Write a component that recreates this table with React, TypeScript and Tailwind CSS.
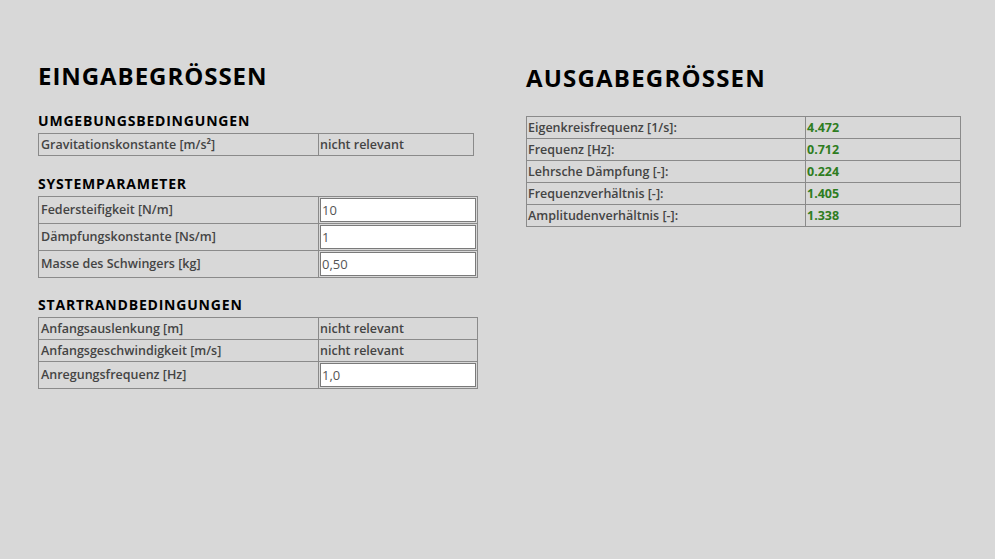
import React from "react";

const font = { fontFamily: '"Open Sans", "DejaVu Sans", sans-serif' };

type Row = { label: string; value: string; input?: boolean };

function InputTable({ rows, width }: { rows: Row[]; width: string }) {
  return (
    <table className={`${width} border-collapse text-[12.5px] font-semibold text-[#444]`}>
      <tbody>
        {rows.map((r) => (
          <tr key={r.label}>
            <td className="w-[280px] border border-[#8a8a8a] px-[2px] h-[22px] leading-[20px]">{r.label}</td>
            {r.input ? (
              <td className="border border-[#8a8a8a] p-[1px]">
                <input
                  defaultValue={r.value}
                  className="block w-full h-[24px] bg-white border border-[#7a7a7a] px-[1px] font-normal text-[#555] text-[13px] outline-none"
                  style={font}
                />
              </td>
            ) : (
              <td className="border border-[#8a8a8a] px-[1px] h-[21px] leading-[19px]">{r.value}</td>
            )}
          </tr>
        ))}
      </tbody>
    </table>
  );
}

export default function App() {
  const outputs = [
    ["Eigenkreisfrequenz [1/s]:", "4.472"],
    ["Frequenz [Hz]:", "0.712"],
    ["Lehrsche Dämpfung [-]:", "0.224"],
    ["Frequenzverhältnis [-]:", "1.405"],
    ["Amplitudenverhältnis [-]:", "1.338"],
  ];

  return (
    <div className="w-[995px] h-[559px] bg-[#d8d8d8] flex px-[38px]" style={font}>
      {/* Eingabe */}
      <div className="w-[488px] shrink-0 pt-[61px]">
        <h1 className="text-[24px] leading-[30px] font-bold text-black tracking-[0.95px]">EINGABEGRÖSSEN</h1>

        <h2 className="mt-[21px] text-[14px] leading-[18px] font-bold text-black tracking-[0.8px]">UMGEBUNGSBEDINGUNGEN</h2>
        <div className="mt-[3px]">
          <InputTable width="w-[436px]" rows={[{ label: "Gravitationskonstante [m/s²]", value: "nicht relevant" }]} />
        </div>

        <h2 className="mt-[19px] text-[14px] leading-[18px] font-bold text-black tracking-[0.8px]">SYSTEMPARAMETER</h2>
        <div className="mt-[3px]">
          <InputTable
            width="w-[440px]"
            rows={[
              { label: "Federsteifigkeit [N/m]", value: "10", input: true },
              { label: "Dämpfungskonstante [Ns/m]", value: "1", input: true },
              { label: "Masse des Schwingers [kg]", value: "0,50", input: true },
            ]}
          />
        </div>

        <h2 className="mt-[18px] text-[14px] leading-[18px] font-bold text-black tracking-[0.8px]">STARTRANDBEDINGUNGEN</h2>
        <div className="mt-[3px]">
          <InputTable
            width="w-[440px]"
            rows={[
              { label: "Anfangsauslenkung [m]", value: "nicht relevant" },
              { label: "Anfangsgeschwindigkeit [m/s]", value: "nicht relevant" },
              { label: "Anregungsfrequenz [Hz]", value: "1,0", input: true },
            ]}
          />
        </div>
      </div>

      {/* Ausgabe */}
      <div className="pt-[63px]">
        <h1 className="text-[24px] leading-[30px] font-bold text-black tracking-[1.2px]">AUSGABEGRÖSSEN</h1>
        <table className="mt-[23px] w-[435px] border-collapse text-[12.5px] font-semibold text-[#444]">
          <tbody>
            {outputs.map(([l, v]) => (
              <tr key={l}>
                <td className="w-[279px] border border-[#8a8a8a] px-[1px] h-[22px] leading-[20px]">{l}</td>
                <td className="border border-[#8a8a8a] px-[1px] h-[22px] leading-[20px] font-bold text-[#2f7d1f]">{v}</td>
              </tr>
            ))}
          </tbody>
        </table>
      </div>
    </div>
  );
}
